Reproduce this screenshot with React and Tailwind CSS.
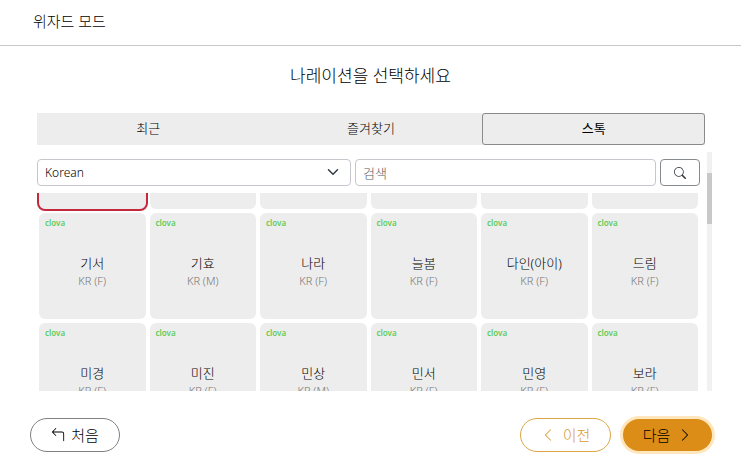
import { useEffect, useRef, useState } from 'react';
import { BsArrow90DegLeft, BsChevronLeft, BsChevronRight, BsSearch } from 'react-icons/bs';

const tabs = ['최근', '즐겨찾기', '스톡'];

const voices = [
    { name: '기서', info: 'KR (F)' },
    { name: '기효', info: 'KR (M)' },
    { name: '나라', info: 'KR (F)' },
    { name: '늘봄', info: 'KR (F)' },
    { name: '다인(아이)', info: 'KR (F)' },
    { name: '드림', info: 'KR (F)' },
    { name: '미경', info: 'KR (F)' },
    { name: '미진', info: 'KR (F)' },
    { name: '민상', info: 'KR (M)' },
    { name: '민서', info: 'KR (F)' },
    { name: '민영', info: 'KR (F)' },
    { name: '보라', info: 'KR (F)' },
];

const VoiceCard = ({ voice, selected, onSelect }) => {
    return (
        <button
            type="button"
            onClick={onSelect}
            className={`relative m-0.5 h-[106px] rounded-md bg-[#ededed] flex flex-col items-center justify-center ${selected ? 'outline-2 outline-[#c4283c]' : ''}`}
        >
            {voice && (
                <>
                    <span className="absolute left-1.5 top-1 text-[8px] leading-3 font-semibold text-[#62cc5a]">clova</span>
                    <span className="mt-3 text-[13px] leading-[18px] text-black">{voice.name}</span>
                    <span className="text-[11px] leading-[18px] text-[#777]">{voice.info}</span>
                </>
            )}
        </button>
    );
};

const VoiceGrid = () => {
    const gridRef = useRef(null);
    const [selected, setSelected] = useState(0);
    const cards = [null, null, null, null, null, null, ...voices];

    useEffect(() => {
        gridRef.current.scrollTop = 92;
    }, []);

    return (
        <div ref={gridRef} className="flex-1 min-h-0 overflow-y-auto [scrollbar-width:none]">
            <div className="grid grid-cols-6">
                {cards.map((voice, index) => (
                    <VoiceCard key={index} voice={voice} selected={selected === index} onSelect={() => setSelected(index)} />
                ))}
            </div>
        </div>
    );
};

const SearchBar = () => {
    const [search, setSearch] = useState('');

    return (
        <form onSubmit={(e) => e.preventDefault()} className="grid grid-cols-[314fr_301fr_40px] gap-1 py-[7px] text-xs">
            <div className="relative">
                <select aria-label="Korean" className="w-full h-[27px] appearance-none rounded border border-[#c4c8cc] bg-white pl-[7px] text-black">
                    <option>Korean</option>
                </select>
                <svg viewBox="0 0 16 16" className="pointer-events-none absolute right-3 top-[7px] size-3" fill="none" stroke="#343a40" strokeWidth="2" strokeLinecap="round" strokeLinejoin="round">
                    <path d="m2 5 6 6 6-6" />
                </svg>
            </div>
            <input
                type="text"
                aria-label="검색"
                placeholder="검색"
                value={search}
                onChange={(e) => setSearch(e.target.value)}
                className="min-w-0 h-[27px] rounded border border-[#c4c8cc] px-[7px] text-[13px] text-[#222] placeholder:text-[#555b61]"
            />
            <button type="submit" aria-label="검색" className="h-[27px] rounded border border-[#868b90] flex items-center justify-center">
                <BsSearch className="size-3 text-[#343a40]" />
            </button>
        </form>
    );
};

const App = () => {
    const [tab, setTab] = useState('스톡');

    return (
        <div className="h-screen flex flex-col bg-white font-light text-black font-['Noto_Sans','Noto_Sans_CJK_KR',sans-serif]">
            <header className="h-[46px] shrink-0 border-b border-[#c8c8c8] px-[33px] pb-1 flex items-center">
                <h1 className="text-[15px] leading-5">위자드 모드</h1>
            </header>
            <h2 className="shrink-0 pt-5 pb-[27px] text-center text-[17px] leading-5">나레이션을 선택하세요</h2>
            <main className="flex-1 min-h-0 flex flex-col pl-[37px] pr-[29px]">
                <div role="tablist" className="mr-[7px] grid grid-cols-3 bg-[#ededed] text-[13px]">
                    {tabs.map((item) => (
                        <button
                            key={item}
                            type="button"
                            role="tab"
                            aria-selected={tab === item}
                            onClick={() => setTab(item)}
                            className={`h-8 ${tab === item ? 'rounded-[3px] border border-[#8a8a8a] font-normal text-black' : 'text-black'}`}
                        >
                            {item}
                        </button>
                    ))}
                </div>
                <div className="mt-[7px] flex-1 min-h-0 flex gap-[7px]">
                    <div className="flex-1 min-w-0 flex flex-col">
                        <SearchBar />
                        <VoiceGrid />
                    </div>
                    <div className="w-[5px] bg-[#f1f1f1] pt-[21px]">
                        <div className="h-[51px] bg-[#c8c8c8]"></div>
                    </div>
                </div>
            </main>
            <footer className="shrink-0 flex items-center gap-3 pl-[30px] pr-[29px] pt-[27px] pb-[18px] text-[15px]">
                <button type="button" className="mr-auto w-[90px] h-[34px] rounded-full border border-[#808080] flex items-center justify-center gap-1.5">
                    <BsArrow90DegLeft className="size-3.5" />
                    처음
                </button>
                <button type="button" className="w-[91px] h-[34px] rounded-full border border-[#dda544] text-[#d99a30] flex items-center justify-center gap-2">
                    <BsChevronLeft className="size-3.5" />
                    이전
                </button>
                <button type="button" className="w-[89px] h-8 rounded-full bg-[#db8d17] ring-3 ring-[#ffe6bd] text-black flex items-center justify-center gap-2">
                    다음
                    <BsChevronRight className="size-3.5" />
                </button>
            </footer>
        </div>
    );
};

export default App;
